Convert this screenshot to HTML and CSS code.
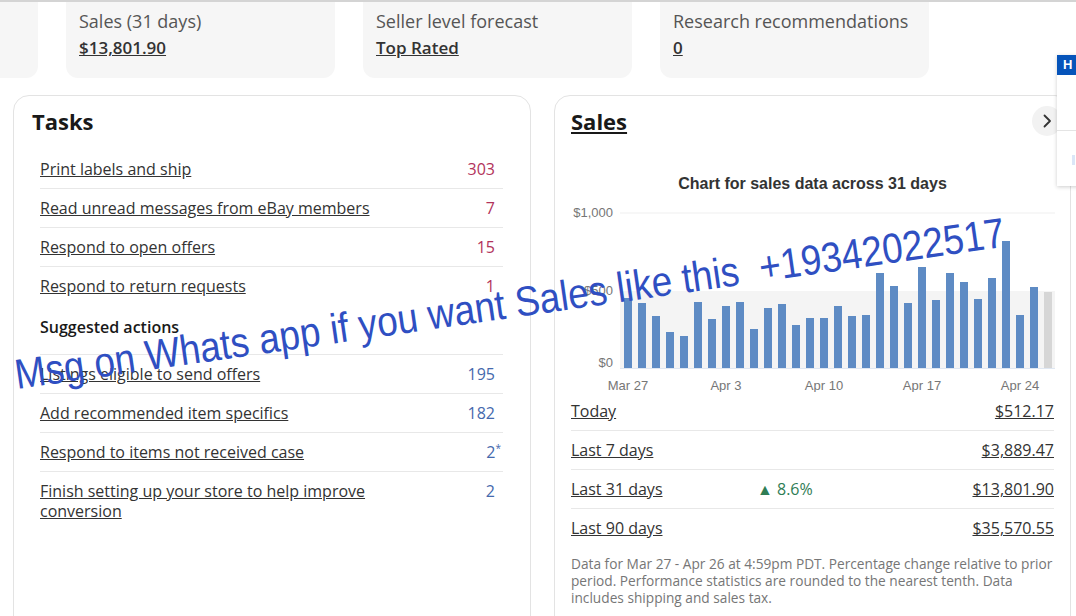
FILE: index.html
```html
<!DOCTYPE html>
<html lang="en">
<head>
    <meta charset="UTF-8">
    <meta name="viewport" content="width=device-width, initial-scale=1.0">
    <title>Seller Hub - Overview</title>
    <link rel="stylesheet" href="styles.css">
</head>
<body>
    <div class="stats">
        <div class="stat">
            <div class="stat-label">Listings</div>
            <a class="stat-value" href="#">12</a>
        </div>
        <div class="stat">
            <div class="stat-label">Sales (31 days)</div>
            <a class="stat-value" href="#">$13,801.90</a>
        </div>
        <div class="stat">
            <div class="stat-label">Seller level forecast</div>
            <a class="stat-value" href="#">Top Rated</a>
        </div>
        <div class="stat">
            <div class="stat-label">Research recommendations</div>
            <a class="stat-value" href="#">0</a>
        </div>
    </div>

    <div class="main">
        <div class="panel tasks">
            <div class="panel-head">
                <h2>Tasks</h2>
            </div>
            <div class="task-group">
                <div class="task"><a href="#">Print labels and ship</a><span class="count urgent">303</span></div>
                <div class="task"><a href="#">Read unread messages from eBay members</a><span class="count urgent">7</span></div>
                <div class="task"><a href="#">Respond to open offers</a><span class="count urgent">15</span></div>
                <div class="task"><a href="#">Respond to return requests</a><span class="count urgent">1</span></div>
            </div>
            <div class="group-title">Suggested actions</div>
            <div class="task-group">
                <div class="task"><a href="#">Listings eligible to send offers</a><span class="count info">195</span></div>
                <div class="task"><a href="#">Add recommended item specifics</a><span class="count info">182</span></div>
                <div class="task"><a href="#">Respond to items not received case</a><span class="count info">2<sup class="note">*</sup></span></div>
                <div class="task"><a href="#">Finish setting up your store to help improve conversion</a><span class="count info">2</span></div>
            </div>
        </div>

        <div class="panel sales">
            <div class="panel-head">
                <h2><a href="#">Sales</a></h2>
                <button class="next" type="button" aria-label="Next">
                    <svg width="16" height="16" viewBox="0 0 16 16"><path d="M5.5 2.5 L11 8 L5.5 13.5" fill="none" stroke="#333" stroke-width="1.8" stroke-linecap="round" stroke-linejoin="round"/></svg>
                </button>
            </div>
            <div class="chart-title">Chart for sales data across 31 days</div>
            <svg class="chart" width="484" height="198" viewBox="0 0 484 198">
                <line x1="49" y1="19" x2="484" y2="19" stroke="#efefef" stroke-width="1"/>
                <rect x="49" y="97" width="435" height="77" fill="#f4f4f4"/>
                <text x="42" y="23" class="axis" text-anchor="end">$1,000</text>
                <text x="42" y="101" class="axis" text-anchor="end">$500</text>
                <text x="42" y="173" class="axis" text-anchor="end">$0</text>
                <g id="bars" fill="#5e8bc4"></g>
                <line x1="49" y1="174.5" x2="484" y2="174.5" stroke="#dfe7f2" stroke-width="1"/>
                <text x="57" y="196" class="axis" text-anchor="middle">Mar 27</text>
                <text x="155" y="196" class="axis" text-anchor="middle">Apr 3</text>
                <text x="253" y="196" class="axis" text-anchor="middle">Apr 10</text>
                <text x="351" y="196" class="axis" text-anchor="middle">Apr 17</text>
                <text x="449" y="196" class="axis" text-anchor="middle">Apr 24</text>
            </svg>
            <div class="summary">
                <div class="sum-row"><a href="#">Today</a><span></span><a class="amount" href="#">$512.17</a></div>
                <div class="sum-row"><a href="#">Last 7 days</a><span></span><a class="amount" href="#">$3,889.47</a></div>
                <div class="sum-row"><a href="#">Last 31 days</a><span class="change">&#9650; 8.6%</span><a class="amount" href="#">$13,801.90</a></div>
                <div class="sum-row"><a href="#">Last 90 days</a><span></span><a class="amount" href="#">$35,570.55</a></div>
            </div>
            <p class="footnote">Data for Mar 27 - Apr 26 at 4:59pm PDT. Percentage change relative to prior<br>period. Performance statistics are rounded to the nearest tenth. Data<br>includes shipping and sales tax.</p>
        </div>
    </div>

    <div class="help-tab">
        <div class="help-head">H</div>
        <div class="help-item"></div>
        <div class="help-item"><span class="help-dot"></span></div>
    </div>

    <div class="watermark">Msg on Whats app if you want Sales like this &nbsp;+19342022517</div>

    <script>
        // daily sales for the last 31 days, bar heights in px ($1,000 = 155px)
        const days = [70, 65, 52, 36, 32, 66, 49, 62, 66, 39, 60, 64, 43, 50, 50, 62,
                      52, 53, 95, 82, 65, 101, 68, 95, 86, 69, 90, 127, 53, 81, 76];
        const bars = document.getElementById('bars');
        days.forEach(function (h, i) {
            const r = document.createElementNS('http://www.w3.org/2000/svg', 'rect');
            r.setAttribute('x', 53 + i * 14);
            r.setAttribute('y', 174 - h);
            r.setAttribute('width', 8);
            r.setAttribute('height', h);
            if (i === days.length - 1) r.setAttribute('fill', '#d6d6d6');
            bars.appendChild(r);
        });
    </script>
</body>
</html>
```

FILE: styles.css
```css
body {
    font-family: "Open Sans", "Liberation Sans", Arial, sans-serif;
    margin: 0;
    padding: 0;
    background-color: #fff;
    color: #191919;
    border-top: 2px solid #d4d4d4;
    overflow: hidden;
    height: 614px;
    position: relative;
}

a {
    color: #333;
    text-decoration: underline;
}

.stats {
    display: flex;
    gap: 28px;
    margin-left: -231px;
    margin-top: -12px;
}

.stat {
    flex: none;
    width: 269px;
    height: 88px;
    box-sizing: border-box;
    padding: 19px 13px 0;
    background-color: #f6f6f6;
    border-radius: 12px;
}

.stat-label {
    font-size: 18px;
    line-height: 24px;
    color: #555;
}

.stat-value {
    display: inline-block;
    margin-top: 3px;
    font-size: 17px;
    line-height: 24px;
    font-weight: 600;
}

.main {
    display: flex;
    gap: 23px;
    margin-top: 17px;
    padding-left: 13px;
}

.panel {
    flex: none;
    box-sizing: border-box;
    height: 560px;
    border: 1px solid #e3e3e3;
    border-radius: 16px;
    background-color: #fff;
}

.tasks {
    width: 518px;
    padding: 0 27px 0 26px;
}

.sales {
    width: 517px;
    padding: 0 16px;
}

.panel-head {
    display: flex;
    align-items: center;
    justify-content: space-between;
    height: 50px;
    padding-bottom: 4px;
}

.panel-head h2 {
    margin: 0;
    font-size: 22px;
    line-height: 28px;
    font-weight: bold;
}

.tasks .panel-head h2 {
    margin-left: -8px;
}

.panel-head h2 a {
    color: #191919;
}

.next {
    width: 30px;
    height: 30px;
    margin-right: -8px;
    border: none;
    border-radius: 50%;
    background-color: #f2f2f2;
    display: flex;
    align-items: center;
    justify-content: center;
    padding: 0;
}

.task {
    display: flex;
    justify-content: space-between;
    align-items: flex-start;
    gap: 40px;
    padding: 9px 8px 9px 0;
    font-size: 16px;
    line-height: 20px;
    border-bottom: 1px solid #e8e8e8;
}

.task a {
    max-width: 345px;
}

.task:last-child {
    border-bottom: none;
}

.count {
    flex: none;
    font-weight: 500;
}

.urgent {
    color: #b2335b;
}

.info {
    color: #4569ad;
}

.note {
    font-size: 10px;
    line-height: 0;
    margin-right: -6px;
}

.group-title {
    padding: 12px 0 17px;
    font-size: 16px;
    line-height: 20px;
    font-weight: 600;
    border-bottom: 1px solid #e8e8e8;
}

.chart-title {
    margin-top: 24px;
    text-align: center;
    font-family: "Liberation Sans", Arial, sans-serif;
    font-size: 16px;
    line-height: 20px;
    font-weight: bold;
    color: #333;
}

.chart {
    display: block;
}

.axis {
    font-family: "Liberation Sans", Arial, sans-serif;
    font-size: 13px;
    fill: #767676;
}

.sum-row {
    display: grid;
    grid-template-columns: 186px 1fr auto;
    padding: 9px 0;
    font-size: 16px;
    line-height: 20px;
    border-bottom: 1px solid #e8e8e8;
}

.sum-row:last-child {
    border-bottom: none;
}

.change {
    color: #2f7d55;
}

.footnote {
    margin: 8px 0 0;
    font-size: 13.7px;
    line-height: 17px;
    color: #767676;
    white-space: nowrap;
}

.help-tab {
    position: absolute;
    left: 1057px;
    top: 53px;
    width: 40px;
    background-color: #fff;
    box-shadow: 0 1px 4px rgba(0, 0, 0, 0.2);
}

.help-head {
    height: 20px;
    padding-left: 6px;
    background-color: #0654ba;
    color: #fff;
    font-family: "Liberation Sans", Arial, sans-serif;
    font-size: 13px;
    font-weight: bold;
    line-height: 20px;
}

.help-item {
    height: 55px;
    border-bottom: 1px solid #e4e4e4;
    position: relative;
}

.help-item:last-child {
    border-bottom: none;
}

.help-dot {
    position: absolute;
    left: 15px;
    top: 24px;
    width: 3px;
    height: 10px;
    background-color: #dbe6f7;
}

.watermark {
    position: absolute;
    left: 18px;
    top: 352px;
    font-family: "Liberation Sans", Arial, sans-serif;
    font-size: 42px;
    line-height: 42px;
    color: #2f4fc2;
    white-space: nowrap;
    transform-origin: 0 100%;
    transform: rotate(-8.2deg) scaleX(0.88);
}
```
